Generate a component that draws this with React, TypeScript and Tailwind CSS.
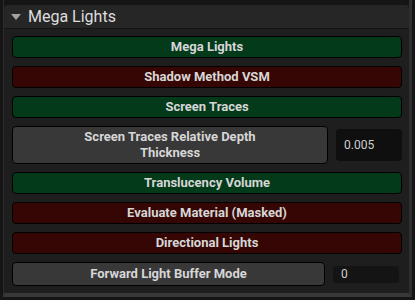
const rows = [
  { label: 'Mega Lights', tone: 'green' },
  { label: 'Shadow Method VSM', tone: 'red' },
  { label: 'Screen Traces', tone: 'green' },
]

const rows2 = [
  { label: 'Translucency Volume', tone: 'green' },
  { label: 'Evaluate Material (Masked)', tone: 'red' },
  { label: 'Directional Lights', tone: 'red' },
]

const toneClass: Record<string, string> = {
  green: 'bg-[#023a1a]',
  red: 'bg-[#360604]',
  gray: 'bg-[#383838]',
}

function Toggle({ label, tone }: { label: string; tone: string }) {
  return (
    <div
      className={`h-[22px] flex items-center justify-center rounded-[4px] border border-black text-[13px] font-bold text-[#d6d6d6] ${toneClass[tone]}`}
    >
      {label}
    </div>
  )
}

export default function App() {
  return (
    <div
      className="w-[415px] h-[300px] bg-[#151515] pl-[3px]"
      style={{ fontFamily: 'Roboto, "Liberation Sans", sans-serif' }}
    >
      <div className="w-[409px] border-l border-l-[#2c2c2c] border-r-[3px] border-r-[#2e2e2e] border-b-[4px] border-b-[#383838] pt-[5px]">
        <div className="h-[24px] bg-[#262626] rounded-t-[4px] flex items-center pl-[7px] gap-[7px] text-[16px] text-[#dedede] border-b border-b-[#141414]">
          <svg width="10" height="6" viewBox="0 0 10 6" className="mt-[1px]">
            <path d="M0 0 L10 0 L5 6 Z" fill="#a3a3a3" />
          </svg>
          <span className="leading-none">Mega Lights</span>
        </div>
        <div className="bg-[#1e1e1e] pl-[8px] pr-[7px] pt-[7px] pb-[7px] flex flex-col gap-[8px]">
          {rows.map((r) => (
            <Toggle key={r.label} label={r.label} tone={r.tone} />
          ))}
          <div className="flex items-center gap-[8px]">
            <div className="flex-1 h-[38px] flex items-center justify-center text-center rounded-[4px] border border-black bg-[#383838] text-[13px] font-bold leading-[16px] text-[#d6d6d6]">
              Screen Traces Relative Depth
              <br />
              Thickness
            </div>
            <div className="w-[66px] h-[32px] rounded-[4px] bg-[#0f0f0f] flex items-center pl-[8px] text-[12px] text-[#d0d0d0]">
              0.005
            </div>
          </div>
          {rows2.map((r) => (
            <Toggle key={r.label} label={r.label} tone={r.tone} />
          ))}
          <div className="flex items-center gap-[8px] pr-[3px]">
            <div className="flex-1 h-[24px] flex items-center justify-center rounded-[4px] border border-black bg-[#383838] text-[13px] font-bold text-[#d6d6d6]">
              Forward Light Buffer Mode
            </div>
            <div className="w-[66px] h-[17px] rounded-[3px] bg-[#141414] flex items-center pl-[8px] text-[12px] text-[#d0d0d0]">
              0
            </div>
          </div>
        </div>
      </div>
    </div>
  )
}
